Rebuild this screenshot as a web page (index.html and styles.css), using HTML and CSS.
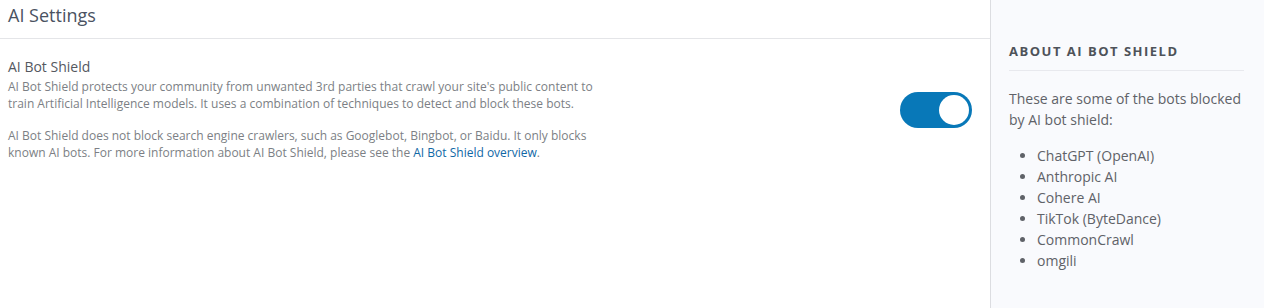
FILE: index.html
```html
<!DOCTYPE html>
<html lang="en">

<head>
    <meta charset="UTF-8">
    <meta name="viewport" content="width=device-width, initial-scale=1.0">
    <link rel="stylesheet" href="styles.css">
</head>

<body>
    <div class="layout">
        <div class="main">
            <div class="page-header">
                <h1>AI Settings</h1>
            </div>
            <div class="setting">
                <div class="setting-text">
                    <h3>AI Bot Shield</h3>
                    <p>AI Bot Shield protects your community from unwanted 3rd parties that crawl your site's public content to train Artificial Intelligence models. It uses a combination of techniques to detect and block these bots.</p>
                    <p>AI Bot Shield does not block search engine crawlers, such as Googlebot, Bingbot, or Baidu. It only blocks known AI bots. For more information about AI Bot Shield, please see the <a href="#">AI Bot Shield overview</a>.</p>
                </div>
                <label class="switch">
                    <input type="checkbox" checked>
                    <span class="slider"></span>
                </label>
            </div>
        </div>

        <div class="sidebar">
            <h4>About AI Bot Shield</h4>
            <p>These are some of the bots blocked by AI bot shield:</p>
            <ul>
                <li>ChatGPT (OpenAI)</li>
                <li>Anthropic AI</li>
                <li>Cohere AI</li>
                <li>TikTok (ByteDance)</li>
                <li>CommonCrawl</li>
                <li>omgili</li>
            </ul>
        </div>
    </div>
</body>

</html>
```

FILE: styles.css
```css
/* page layout */
* {
    box-sizing: border-box;
}

body {
    margin: 0;
    font-family: "Open Sans", "Liberation Sans", sans-serif;
    color: #4a5160;
    background: #fff;
}

.layout {
    display: flex;
    height: 308px;
}

.main {
    flex: 1;
}

.sidebar {
    width: 274px;
    padding: 41px 20px 0 18px;
    background-color: #f9fafd;
    border-left: 1px solid #dcdde1;
}

.page-header {
    height: 39px;
    border-bottom: 1px solid #e4e5e8;
    padding: 0 8px;
}

.page-header h1 {
    margin: 0;
    padding-top: 2px;
    font-size: 18px;
    font-weight: 400;
    line-height: 26px;
    color: #4a5261;
}

.setting {
    display: flex;
    justify-content: space-between;
    padding: 18px 18px 0 8px;
}

.setting-text {
    max-width: 600px;
}

.setting h3 {
    margin: 0 0 1px;
    font-size: 14px;
    font-weight: 500;
    line-height: 20px;
    color: #55585f;
}

.setting p {
    margin: 0 0 15px;
    font-size: 12px;
    line-height: 17px;
    color: #7c7f85;
}

.setting a {
    color: #1068a6;
    text-decoration: none;
}

/* toggle switch */
.switch {
    position: relative;
    display: inline-block;
    width: 72px;
    height: 36px;
    margin-top: 35px;
    flex-shrink: 0;
}

.switch input {
    opacity: 0;
    width: 0;
    height: 0;
}

.slider {
    position: absolute;
    cursor: pointer;
    top: 0;
    left: 0;
    right: 0;
    bottom: 0;
    background-color: #ccc;
    border-radius: 18px;
}

.slider:before {
    position: absolute;
    content: "";
    width: 30px;
    height: 30px;
    left: 3px;
    top: 3px;
    background-color: white;
    border-radius: 50%;
}

.switch input:checked + .slider {
    background-color: #0878b8;
}

.switch input:checked + .slider:before {
    transform: translateX(36px);
}

/* sidebar */
.sidebar h4 {
    margin: 0;
    padding-bottom: 9px;
    border-bottom: 1px solid #e8e9ee;
    font-size: 13px;
    font-weight: 700;
    letter-spacing: 1.5px;
    text-transform: uppercase;
    line-height: 20px;
    color: #4e5259;
}

.sidebar p {
    margin: 17px 0 15px;
    font-size: 14px;
    line-height: 21px;
    color: #5f6268;
}

.sidebar ul {
    margin: 0;
    padding-left: 28px;
    font-size: 14px;
    line-height: 21px;
    color: #5f6268;
}
```
